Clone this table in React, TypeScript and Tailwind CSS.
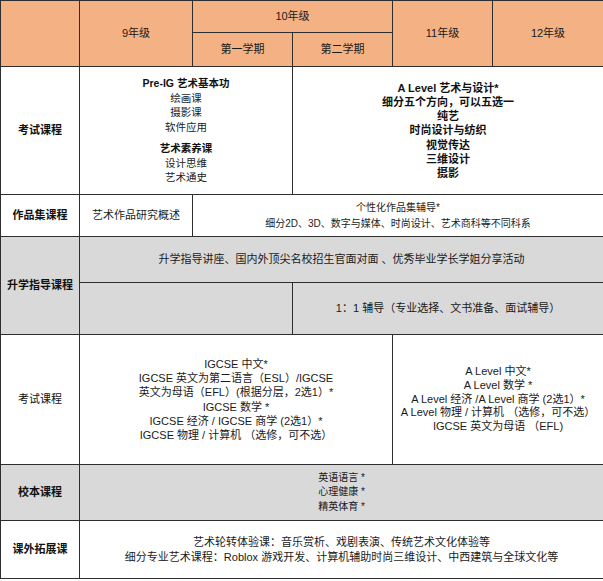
import React from 'react'

const FONT = "font-['Liberation_Sans','Noto_Sans_CJK_SC',sans-serif]"

const cell = 'border border-[#2e2e2e] text-center align-middle p-0'
const head = `${cell} bg-[#f4b183] text-[11px] text-[#1a1a1a]`
const label = `${cell} text-[11px] text-[#111] font-bold`

function Lines({ items, className = '' }: { items: string[]; className?: string }) {
  return (
    <div className={className}>
      {items.map((t) => (
        <div key={t}>{t}</div>
      ))}
    </div>
  )
}

export default function App() {
  return (
    <div className={`w-[603px] h-[581px] bg-white ${FONT}`}>
      <table className="w-[603px] table-fixed border-collapse">
        <colgroup>
          <col className="w-[79px]" />
          <col className="w-[113px]" />
          <col className="w-[100px]" />
          <col className="w-[100px]" />
          <col className="w-[100px]" />
          <col className="w-[111px]" />
        </colgroup>
        <tbody>
          {/* header */}
          <tr className="h-[32px]">
            <td rowSpan={2} className={head} />
            <td rowSpan={2} className={head}>9年级</td>
            <td colSpan={2} className={head}>10年级</td>
            <td rowSpan={2} className={head}>11年级</td>
            <td rowSpan={2} className={head}>12年级</td>
          </tr>
          <tr className="h-[34px]">
            <td className={head}>第一学期</td>
            <td className={head}>第二学期</td>
          </tr>

          {/* 考试课程 - art */}
          <tr className="h-[128px]">
            <td className={label}>考试课程</td>
            <td colSpan={2} className={`${cell} text-[10.5px] leading-[14.5px] text-[#222]`}>
              <div className="font-bold text-[#111]">Pre-IG 艺术基本功</div>
              <Lines items={['绘画课', '摄影课', '软件应用']} />
              <div className="mt-[7px] font-bold text-[#111]">艺术素养课</div>
              <Lines items={['设计思维', '艺术通史']} />
            </td>
            <td colSpan={3} className={`${cell} text-[11px] leading-[14.2px] font-bold text-[#111]`}>
              <Lines
                items={[
                  'A Level 艺术与设计*',
                  '细分五个方向，可以五选一',
                  '纯艺',
                  '时尚设计与纺织',
                  '视觉传达',
                  '三维设计',
                  '摄影',
                ]}
              />
            </td>
          </tr>

          {/* 作品集课程 */}
          <tr className="h-[42px]">
            <td className={label}>作品集课程</td>
            <td className={`${cell} text-[11px] text-[#222]`}>艺术作品研究概述</td>
            <td colSpan={4} className={`${cell} text-[10px] leading-[16px] text-[#222]`}>
              <div>个性化作品集辅导*</div>
              <div>细分2D、3D、数字与媒体、时尚设计、艺术商科等不同科系</div>
            </td>
          </tr>

          {/* 升学指导课程 */}
          <tr className="h-[46px] bg-[#d9d9d9]">
            <td rowSpan={2} className={label}>升学指导课程</td>
            <td colSpan={5} className={`${cell} text-[11px] text-[#1a1a1a]`}>
              升学指导讲座、国内外顶尖名校招生官面对面 、优秀毕业学长学姐分享活动
            </td>
          </tr>
          <tr className="h-[52px] bg-[#d9d9d9]">
            <td colSpan={2} className={cell} />
            <td colSpan={3} className={`${cell} text-[11px] text-[#1a1a1a]`}>
              1：1 辅导（专业选择、文书准备、面试辅导）
            </td>
          </tr>

          {/* 考试课程 - academic */}
          <tr className="h-[130px]">
            <td className={`${cell} text-[11px] text-[#111]`}>考试课程</td>
            <td colSpan={3} className={`${cell} text-[11px] leading-[14.3px] text-[#1a1a1a]`}>
              <Lines
                items={[
                  'IGCSE 中文*',
                  'IGCSE 英文为第二语言（ESL）/IGCSE',
                  '英文为母语（EFL）(根据分层，2选1）*',
                  'IGCSE 数学 *',
                  'IGCSE 经济 / IGCSE 商学 (2选1）*',
                  'IGCSE 物理 / 计算机 （选修，可不选）',
                ]}
              />
            </td>
            <td colSpan={2} className={`${cell} text-[11px] leading-[13.8px] text-[#1a1a1a]`}>
              <Lines
                items={[
                  'A Level 中文*',
                  'A Level 数学 *',
                  'A Level 经济 /A Level 商学 (2选1）*',
                  'A Level 物理 / 计算机 （选修，可不选）',
                  'IGCSE 英文为母语 （EFL)',
                ]}
              />
            </td>
          </tr>

          {/* 校本课程 */}
          <tr className="h-[56px] bg-[#d9d9d9]">
            <td className={label}>校本课程</td>
            <td colSpan={5} className={`${cell} text-[10px] leading-[14.5px] text-[#1a1a1a]`}>
              <Lines items={['英语语言 *', '心理健康 *', '精英体育 *']} />
            </td>
          </tr>

          {/* 课外拓展课 */}
          <tr className="h-[58px]">
            <td className={label}>课外拓展课</td>
            <td colSpan={5} className={`${cell} text-[11px] leading-[15px] text-[#1a1a1a]`}>
              <div>艺术轮转体验课：音乐赏析、戏剧表演、传统艺术文化体验等</div>
              <div>细分专业艺术课程：Roblox 游戏开发、计算机辅助时尚三维设计、中西建筑与全球文化等</div>
            </td>
          </tr>
        </tbody>
      </table>
    </div>
  )
}
